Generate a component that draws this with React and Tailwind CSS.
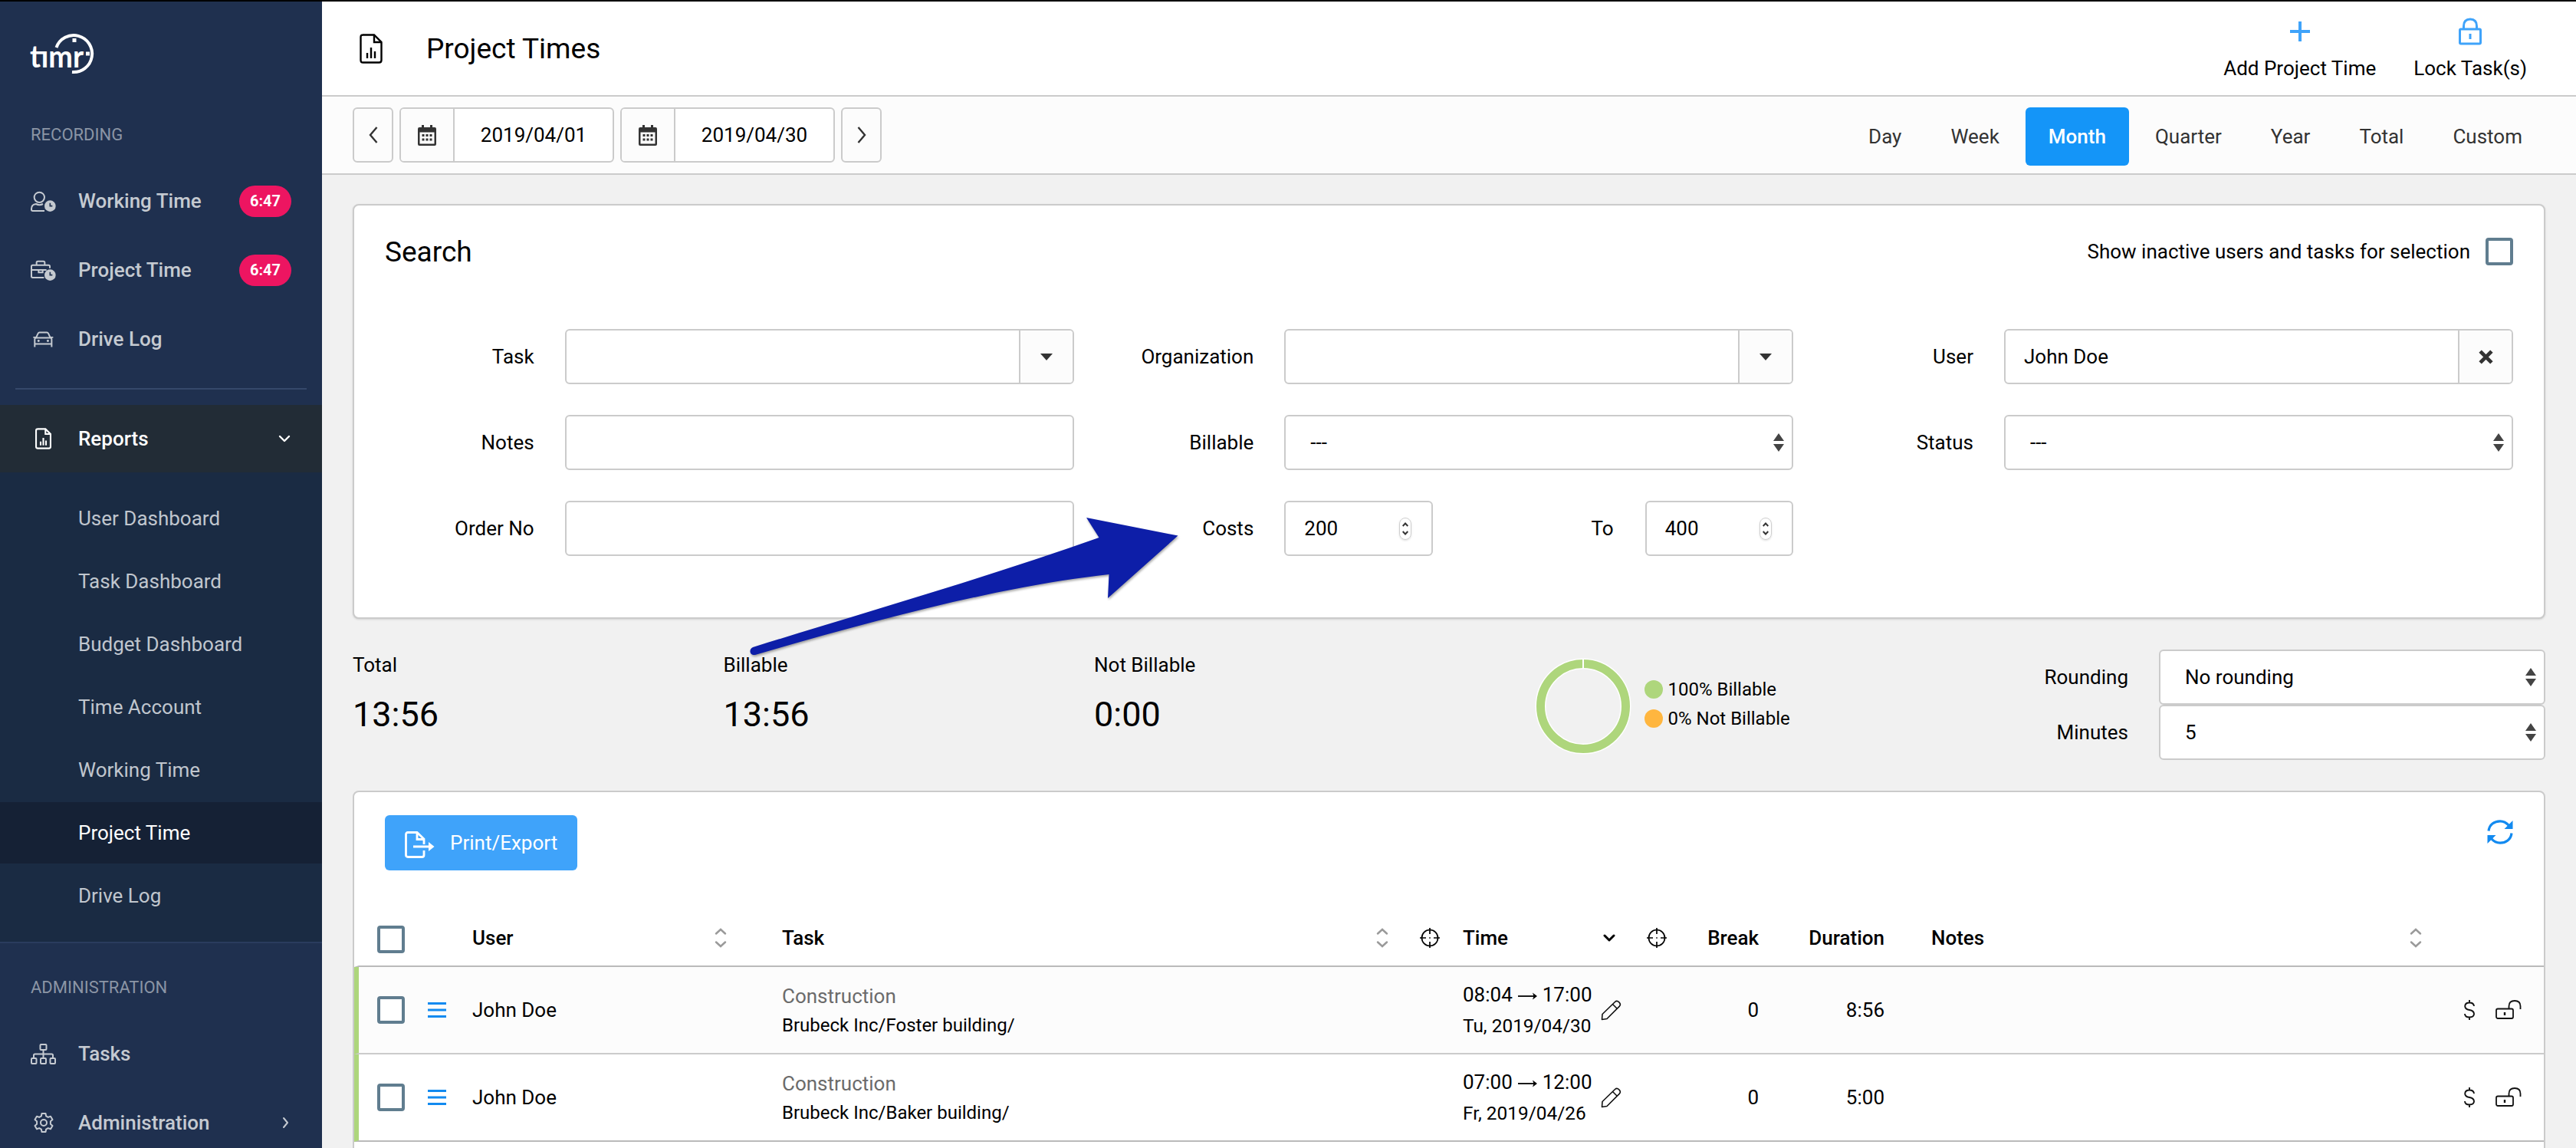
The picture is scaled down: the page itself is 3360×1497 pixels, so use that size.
import React, { useState } from 'react';

const PERIODS = ['Day', 'Week', 'Month', 'Quarter', 'Year', 'Total', 'Custom'];

const REPORTS = [
    'User Dashboard',
    'Task Dashboard',
    'Budget Dashboard',
    'Time Account',
    'Working Time',
    'Project Time',
    'Drive Log'
];

const ROWS = [
    { id: 1, user: 'John Doe', task: 'Construction', path: 'Brubeck Inc/Foster building/', from: '08:04', to: '17:00', date: 'Tu, 2019/04/30', pause: '0', duration: '8:56' },
    { id: 2, user: 'John Doe', task: 'Construction', path: 'Brubeck Inc/Baker building/', from: '07:00', to: '12:00', date: 'Fr, 2019/04/26', pause: '0', duration: '5:00' },
];

const COLS = 'grid grid-cols-[66px_58px_404px_832px_56px_240px_146px_164px_756px_1fr] items-center pl-6';

/* ---------- Icons ---------- */

const Logo = () => (
    <svg className="w-[86px] h-[56px]" viewBox="0 0 86 56" fill="none">
        <text x="0" y="46" textLength="70" lengthAdjust="spacingAndGlyphs" fill="#fff" className="font-['Lato'] font-bold text-[41px]">tımr</text>
        <path d="M34.500 20 A24 24 0 1 1 55 52" stroke="#fff" strokeWidth="4" />
        <rect x="55.500" y="8" width="5" height="5" fill="#fff" />
        <rect x="73" y="25.500" width="5" height="5" fill="#fff" />
    </svg>
);

const UserClock = () => (
    <svg className="w-[33px] h-[29px]" viewBox="30 655 99 87" fill="none" stroke="currentColor" strokeWidth="6">
        <circle cx="64" cy="683" r="20" />
        <path d="M84 736H38q-5 0-5-5v-3q0-17 18-19q13 7 27 0" />
        <circle cx="106" cy="717" r="22" fill="currentColor" stroke="none" />
        <path d="M106 705V717H115" stroke="#1f304f" strokeWidth="5" />
    </svg>
);

const BriefcaseClock = () => (
    <svg className="w-[33px] h-[29px]" viewBox="30 925 99 87" fill="none" stroke="currentColor" strokeWidth="6">
        <path d="M82 997H38q-5 0-5-5V953q0-5 5-5H100q5 0 5 5v7" />
        <path d="M53 948v-10q0-5 5-5h22q5 0 5 5v10M33 967H92M61 968V977H77V968" />
        <circle cx="106" cy="987" r="22" fill="currentColor" stroke="none" />
        <path d="M106 975V987H115" stroke="#1f304f" strokeWidth="5" />
    </svg>
);

const Car = () => (
    <svg className="w-[27px] h-[23px]" viewBox="38 1206 82 68" fill="none" stroke="currentColor" strokeWidth="6">
        <path d="M50 1234L58 1217q2-4 6-4h29q4 0 6 4L107 1234M39 1232h10M108 1232h10" />
        <path d="M45 1270V1240q0-6 6-6h55q6 0 6 6V1270M45 1258H112" />
        <circle cx="60" cy="1246" r="4.500" fill="currentColor" stroke="none" />
        <circle cx="97" cy="1246" r="4.500" fill="currentColor" stroke="none" />
    </svg>
);

const FileChart = ({ className }) => (
    <svg className={className} viewBox="0 0 30 39" fill="none" stroke="currentColor">
        <path d="M4 1.500H19L28.500 11V34.500q0 3-3 3H4.500q-3 0-3-3V4.500q0-3 3-3Z" />
        <path d="M19 2V11H28.500M10 25V32M15 18V32M20 23V32" />
    </svg>
);

const Sitemap = () => (
    <svg className="w-[33px] h-[27px]" viewBox="0 0 33 27" fill="none" stroke="currentColor" strokeWidth="2">
        <rect x="12.500" y="1" width="8" height="7" rx="1" />
        <rect x="1" y="19" width="6.500" height="7" rx="1" />
        <rect x="13" y="19" width="7" height="7" rx="1" />
        <rect x="25.500" y="19" width="6.500" height="7" rx="1" />
        <path d="M16.500 8V19M4 19V15q0-1.500 1.500-1.500H27.500q1.500 0 1.500 1.500V19" />
    </svg>
);

const Gear = () => (
    <svg className="w-[26px] h-[26px]" viewBox="0 0 26 26" fill="none" stroke="currentColor" strokeWidth="2" strokeLinejoin="round">
        <path d="M10.500 1h5l.6 3.300 2.700 1.600 3.200-1.200 2.500 4.300-2.600 2.200v3.600l2.600 2.200-2.500 4.300-3.200-1.200-2.700 1.600-.6 3.300h-5l-.6-3.300-2.700-1.600-3.200 1.200-2.500-4.300 2.600-2.200v-3.600L1.500 9l2.500-4.300 3.200 1.200 2.700-1.600Z" />
        <circle cx="13" cy="13" r="4" />
    </svg>
);

const Chevron = ({ className, d, width = 3 }) => (
    <svg className={className} viewBox="0 0 16 16" fill="none" stroke="currentColor" strokeWidth={width} strokeLinecap="round" strokeLinejoin="round">
        <path d={d} />
    </svg>
);

const Calendar = () => (
    <svg className="w-6 h-[27px] text-[#333]" viewBox="0 0 24 27">
        <path fill="currentColor" fillRule="evenodd" d="M5 0h3v3h8V0h3v3h3q2 0 2 2V25q0 2-2 2H2q-2 0-2-2V5q0-2 2-2h3ZM2.500 9.500V24.500h19V9.500Z" />
        <path stroke="currentColor" strokeWidth="3" d="M5.500 13.500h3M10.500 13.500h3M15.500 13.500h3M5.500 19h3M10.500 19h3M15.500 19h3" />
    </svg>
);

const Sort = () => (
    <svg className="w-4 h-[26px] shrink-0" viewBox="0 0 16 26" fill="none" stroke="#9a9a9a" strokeWidth="2.500" strokeLinecap="round">
        <path d="M2 7.500L8 2l6 5.500M2 18.500l6 5.500 6-5.500" />
    </svg>
);

const Crosshair = () => (
    <svg className="w-[26px] h-[26px]" viewBox="0 0 26 26" fill="none" stroke="#000" strokeWidth="1.700">
        <circle cx="13" cy="13" r="10.500" />
        <path d="M13 0V8M13 18V26M0 13H8M18 13H26M12.200 13h1.600" />
    </svg>
);

const Pencil = () => (
    <svg className="w-[27px] h-[27px] shrink-0" viewBox="0 0 27 27" fill="none" stroke="#111" strokeWidth="1.600" strokeLinejoin="round">
        <path d="M1.500 25.500L2 18.500L18.500 2.500q2.500-2.300 5.300.3t.6 5.300L8 24.500ZM15.500 5.500L21.500 11.500" />
    </svg>
);

const Unlock = () => (
    <svg className="w-[34px] h-[26px]" viewBox="0 0 34 26" fill="none" stroke="#111" strokeWidth="1.800">
        <rect x="1" y="11.500" width="22" height="12.500" rx="2" />
        <path d="M17.500 11.500V8q0-7 7.500-7t7.500 7v4" />
        <path d="M12 16v4" strokeWidth="2.400" />
    </svg>
);

const Refresh = () => (
    <svg className="w-[34px] h-[34px] text-[#128af0]" viewBox="0 0 34 34" fill="none" stroke="currentColor" strokeWidth="3.200">
        <path d="M2 15.500C3 7 9.500 2.800 17 2.800c5 0 8.500 2.200 11.500 5.700M32 18.500C31 27 24.500 31.200 17 31.200c-5 0-8.500-2.200-11.500-5.700" />
        <path d="M33.500 2V13H22.500ZM.5 32V21H11.500Z" fill="currentColor" stroke="none" />
    </svg>
);

/* ---------- Form pieces ---------- */

const Checkbox = ({ className = '' }) => (
    <span className={`block size-9 shrink-0 rounded-[4px] border-4 border-[#607d8f] bg-white ${className}`}></span>
);

const Arrows = () => (
    <svg className="w-4 h-6" viewBox="0 0 16 24" fill="#444">
        <path d="M8 0l7 10H1ZM8 24l7-10H1Z" />
    </svg>
);

const Field = ({ label, children }) => (
    <div className="flex items-center gap-10 h-[72px]">
        <label className="w-[194.67px] text-right">{label}</label>
        <div className="flex-1 h-full flex">{children}</div>
    </div>
);

const TextBox = ({ children, addon }) => (
    <div className="flex-1 flex border-2 border-[#cbcbcb] rounded-[6px] bg-white overflow-hidden">
        <div className="flex-1 flex items-center pl-6">{children}</div>
        {addon && <div className="w-[70px] border-l-2 border-[#cbcbcb] bg-[#fcfcfc] flex items-center justify-center">{addon}</div>}
    </div>
);

const SelectBox = ({ children }) => (
    <div className="flex-1 h-[72px] flex items-center justify-between border-2 border-[#cbcbcb] rounded-[6px] bg-white pl-8 pr-[9px]">
        {children}
        <Arrows />
    </div>
);

const NumberBox = ({ children }) => (
    <div className="w-[193.67px] flex items-center justify-between border-2 border-[#cbcbcb] rounded-[6px] bg-white pl-6 pr-[26px]">
        {children}
        <span className="w-4 h-[29px] rounded-full border border-[#cfcfcf] shadow-sm flex items-center justify-center">
            <svg className="w-2 h-[17px]" viewBox="0 0 8 17" fill="none" stroke="#333" strokeWidth="2"><path d="M.7 5L4 1.500 7.300 5M.7 12L4 15.500 7.300 12" /></svg>
        </span>
    </div>
);

const Caret = () => <svg className="w-4 h-[9px]" viewBox="0 0 16 9" fill="#333"><path d="M0 0H16L8 9Z" /></svg>;

const DateBox = ({ value }) => (
    <div className="w-[280px] h-[72px] flex border-2 border-[#cbcbcb] rounded-[6px] bg-white overflow-hidden">
        <div className="w-[70px] border-r-2 border-[#cbcbcb] bg-[#fcfcfc] flex items-center justify-center"><Calendar /></div>
        <div className="flex-1 flex items-center justify-center">{value}</div>
    </div>
);

const ArrowButton = ({ d }) => (
    <button className="w-[53px] h-[72px] border-2 border-[#cbcbcb] rounded-[6px] bg-[#fcfcfc] flex items-center justify-center text-[#333]">
        <svg className="w-3 h-[22px]" viewBox="0 0 12 22" fill="none" stroke="currentColor" strokeWidth="2.400"><path d={d} /></svg>
    </button>
);

/* ---------- Sidebar ---------- */

const NavItem = ({ icon, label, badge, active, end }) => (
    <div className={`h-[88px] shrink-0 flex items-center pl-10 pr-10 font-medium ${active ? 'bg-[#222c36] text-white' : 'text-[#c5cad1]'}`}>
        <span className="w-[33px] flex justify-center">{icon}</span>
        <span className="ml-[29px] flex-1">{label}</span>
        {badge && <span className="h-[41px] w-[68px] rounded-full bg-[#ed1561] text-white text-[20px] font-bold flex items-center justify-center">{badge}</span>}
        {end}
    </div>
);

const Sidebar = () => (
    <aside className="w-[420px] shrink-0 bg-[#1f304f] flex flex-col">
        <div className="h-[132px] shrink-0 pl-[39px] pt-10"><Logo /></div>
        <div className="h-[84px] shrink-0 flex items-center pl-10 text-[22px] text-[#8b95a5]">RECORDING</div>
        <div className="flex flex-col gap-[2px]">
            <NavItem icon={<UserClock />} label="Working Time" badge="6:47" />
            <NavItem icon={<BriefcaseClock />} label="Project Time" badge="6:47" />
            <NavItem icon={<Car />} label="Drive Log" />
        </div>
        <div className="h-[2px] shrink-0 mx-5 my-5 bg-[#35486a]"></div>
        <NavItem
            icon={<FileChart className="w-[21px] h-[28px] stroke-[3]" />}
            label="Reports"
            active
            end={<Chevron className="size-4 mr-[1px]" d="M2 5l6 6 6-6" width={2.4} />}
        />
        <ul className="shrink-0 bg-[#1a2b43] py-5 border-b-2 border-[#2a3c5e] flex flex-col gap-[2px]">
            {REPORTS.map((item) => (
                <li key={item} className={`h-20 flex items-center pl-[102px] ${item === 'Project Time' ? 'bg-[#152135] text-white' : 'text-[#c0c6ce]'}`}>
                    {item}
                </li>
            ))}
        </ul>
        <div className="h-[100px] shrink-0 pt-4 flex items-center pl-10 text-[22px] text-[#8b95a5]">ADMINISTRATION</div>
        <div className="flex flex-col gap-[2px]">
            <NavItem icon={<Sitemap />} label="Tasks" />
            <NavItem icon={<Gear />} label="Administration" end={<Chevron className="size-4" d="M6 2l5 6-5 6" width={2} />} />
        </div>
    </aside>
);

/* ---------- Main ---------- */

const Stat = ({ label, value }) => (
    <div className="w-[483.500px] pt-[2px]">
        <div className="leading-9">{label}</div>
        <div className="text-[45px] leading-[54px] mt-5">{value}</div>
    </div>
);

export default function App() {
    const [period, setPeriod] = useState('Month');

    return (
        <div className="relative w-[3360px] h-[1497px] overflow-hidden flex flex-col border-t-2 border-black bg-[#f1f1f1] text-black text-[26px] leading-none font-['Roboto',sans-serif]">
            <div className="flex-1 flex items-start">
                <Sidebar />

                <main className="flex-1 min-w-0">
                    <header className="h-[124px] bg-white border-b-2 border-[#cbcbcb] flex items-center justify-between pl-[49px] pr-[64px]">
                        <div className="flex items-center">
                            <FileChart className="w-[30px] h-[39px] stroke-[2.4]" />
                            <h1 className="ml-[57px] text-[37px]">Project Times</h1>
                        </div>
                        <div className="flex gap-[49px] pb-[1px]">
                            <div className="flex flex-col items-center">
                                <svg className="w-[26px] h-[36px]" viewBox="0 0 26 36" stroke="#3fa3fa" strokeWidth="4"><path d="M13 5V31M0 18H26" /></svg>
                                <span className="mt-[17px]">Add Project Time</span>
                            </div>
                            <div className="flex flex-col items-center">
                                <svg className="w-[30px] h-[36px]" viewBox="0 0 30 36" fill="none" stroke="#3fa3fa" strokeWidth="3">
                                    <rect x="1.500" y="15" width="27" height="19" rx="1.500" />
                                    <path d="M6.500 15V11q0-9 8.500-9t8.500 9v4M15 21v7" />
                                </svg>
                                <span className="mt-[17px]">Lock Task(s)</span>
                            </div>
                        </div>
                    </header>

                    <div className="h-[102px] bg-[#fcfcfc] border-b-2 border-[#cbcbcb] pt-[14px] px-10 flex items-start justify-between">
                        <div className="flex gap-2">
                            <ArrowButton d="M10.500 1L2 11l8.500 10" />
                            <DateBox value="2019/04/01" />
                            <DateBox value="2019/04/30" />
                            <ArrowButton d="M1.500 1L10 11 1.500 21" />
                        </div>
                        <div className="flex gap-1">
                            {PERIODS.map((p) => (
                                <button
                                    key={p}
                                    onClick={() => setPeriod(p)}
                                    className={`h-[76px] px-[30px] rounded-[6px] ${p === period ? 'bg-[#1495f8] text-white font-medium' : 'text-[#333]'}`}
                                >
                                    {p}
                                </button>
                            ))}
                        </div>
                    </div>

                    <div className="px-10 pt-[38px]">
                        {/* Search */}
                        <section className="h-[541px] bg-white border-2 border-[#cbcbcb] rounded-[8px] shadow-sm px-10">
                            <div className="h-[120px] flex items-center justify-between">
                                <h2 className="text-[37px]">Search</h2>
                                <div className="flex items-center gap-5">
                                    <span>Show inactive users and tasks for selection</span>
                                    <Checkbox />
                                </div>
                            </div>
                            <div className="grid grid-cols-3 gap-10 mt-[41px]">
                                <Field label="Task"><TextBox addon={<Caret />} /></Field>
                                <Field label="Organization"><TextBox addon={<Caret />} /></Field>
                                <Field label="User">
                                    <TextBox addon={<svg className="w-[19px] h-[19px]" viewBox="0 0 18 18" stroke="#333" strokeWidth="4.600"><path d="M2 2L16 16M16 2L2 16" /></svg>}>John Doe</TextBox>
                                </Field>
                                <Field label="Notes"><TextBox /></Field>
                                <Field label="Billable"><SelectBox>---</SelectBox></Field>
                                <Field label="Status"><SelectBox>---</SelectBox></Field>
                                <Field label="Order No"><TextBox /></Field>
                                <Field label="Costs">
                                    <NumberBox>200</NumberBox>
                                    <label className="flex-1 flex items-center justify-end pr-[41px]">To</label>
                                    <NumberBox>400</NumberBox>
                                </Field>
                            </div>
                        </section>

                        {/* Totals */}
                        <section className="h-[144px] my-10 flex">
                            <Stat label="Total" value="13:56" />
                            <Stat label="Billable" value="13:56" />
                            <Stat label="Not Billable" value="0:00" />
                            <div className="ml-[91px] mt-[11px] flex">
                                <svg className="w-[126px] h-[126px]" viewBox="0 0 126 126" fill="none">
                                    <circle cx="63" cy="63" r="55.500" stroke="#fff" strokeWidth="14" />
                                    <circle cx="63" cy="63" r="55.500" stroke="#aed67c" strokeWidth="11" />
                                    <path d="M63 1V14" stroke="#fff" strokeWidth="2" />
                                </svg>
                                <div className="ml-[17px] mt-[29px] text-[24px] flex flex-col gap-[14px]">
                                    <div className="flex items-center gap-[7px]"><span className="size-6 rounded-full bg-[#aed67c]"></span>100% Billable</div>
                                    <div className="flex items-center gap-[7px]"><span className="size-6 rounded-full bg-[#ffb63f]"></span>0% Not Billable</div>
                                </div>
                            </div>
                            <div className="ml-auto w-[700px]">
                                <div className="flex items-center gap-10"><label className="flex-1 text-right">Rounding</label><div className="w-[504px] flex"><SelectBox>No rounding</SelectBox></div></div>
                                <div className="flex items-center gap-10"><label className="flex-1 text-right">Minutes</label><div className="w-[504px] flex"><SelectBox>5</SelectBox></div></div>
                            </div>
                        </section>

                        {/* Entries */}
                        <section className="h-[600px] bg-white border-2 border-[#cbcbcb] rounded-[8px]">
                            <div className="flex justify-between px-10 pt-[30px]">
                                <button className="w-[251px] h-[72px] rounded-[6px] bg-[#3fa3fa] text-white flex items-center pl-[26px]">
                                    <svg className="w-[39px] h-[35px] mt-1" viewBox="0 0 39 35" fill="none" stroke="currentColor" strokeWidth="2.800">
                                        <path d="M25 25V31q0 2.500-2.500 2.500H4q-2.500 0-2.500-2.500V4q0-2.500 2.500-2.500H16L25 10V17M16 2V10.500H25M11 20H34" />
                                        <path d="M31 14L38.500 20L31 26Z" fill="currentColor" stroke="none" />
                                    </svg>
                                    <span className="ml-5">Print/Export</span>
                                </button>
                                <div className="pt-[5px]"><Refresh /></div>
                            </div>

                            <div className={`${COLS} mt-[52px] h-[74px] border-b-2 border-[#bababa] border-l-[6px] border-l-transparent font-medium`}>
                                <Checkbox className="mt-1" />
                                <span></span>
                                <div className="flex items-center justify-between pr-[72px]">User<Sort /></div>
                                <div className="flex items-center justify-between pr-[41px]">Task<Sort /></div>
                                <Crosshair />
                                <div className="flex items-center justify-between pr-[41px]">Time<Chevron className="size-4" d="M2 5l6 6 6-6" /></div>
                                <div className="flex items-center justify-between">
                                    <Crosshair />
                                    Break
                                </div>
                                <div className="text-right">Duration</div>
                                <div className="flex items-center justify-between pl-[61px] pr-[55px]">Notes<Sort /></div>
                                <span></span>
                            </div>

                            {ROWS.map((row, i) => (
                                <div key={row.id} className={`${COLS} h-[114px] border-b-2 border-l-[6px] border-l-[#aed67c] ${i === 0 ? 'bg-[#fcfcfc] border-b-[#cbcbcb]' : 'border-b-[#bababa]'}`}>
                                    <Checkbox />
                                    <svg className="w-[24px] h-[22px]" viewBox="0 0 24 22" stroke="#128af0" strokeWidth="3"><path d="M0 2.500H24M0 11H24M0 19.500H24" /></svg>
                                    <div>{row.user}</div>
                                    <div className="pt-[1px]">
                                        <div className="text-[#6b6b6b]">{row.task}</div>
                                        <div className="text-[24px] mt-[13px]">{row.path}</div>
                                    </div>
                                    <span></span>
                                    <div className="flex items-center justify-between pr-[33px]">
                                        <div>
                                            <div className="flex items-center whitespace-nowrap">
                                                {row.from}
                                                <svg className="w-[25px] h-3 mx-[7px] mt-1" viewBox="0 0 25 12" fill="none" stroke="#000" strokeWidth="1.800"><path d="M0 6H23" /><path d="M19 1.500L25 6L19 10.500L20.500 6Z" fill="#000" stroke="none" /></svg>
                                                {row.to}
                                            </div>
                                            <div className="text-[24.4px] mt-4">{row.date}</div>
                                        </div>
                                        <Pencil />
                                    </div>
                                    <div className="text-right">{row.pause}</div>
                                    <div className="text-right">{row.duration}</div>
                                    <span></span>
                                    <div className="flex items-center">
                                        <svg className="w-[14px] h-[26px]" viewBox="0 0 14 26" fill="none" stroke="#111" strokeWidth="1.900">
                                            <path d="M7 0V3.500M7 22.500V26M13 8q-.5-4.500-6-4.500T1.200 8Q1.200 12 7 13T13 18q0 4.500-6 4.500T1 18" />
                                        </svg>
                                        <span className="ml-[27px]"><Unlock /></span>
                                    </div>
                                </div>
                            ))}
                        </section>
                    </div>
                </main>
            </div>

            {/* Pointer to the costs filter */}
            <svg className="absolute left-[970px] top-[660px] w-[580px] h-[210px] drop-shadow-[1px_2px_1.5px_rgba(0,0,0,0.35)]" viewBox="970 662 580 210">
                <path fill="#0d1ea8" d="M982 844C1130 798 1290 752 1433.500 701L1417 675L1536.500 698.500L1445 780L1446.500 749C1300 765 1130 812 985 854C978 855 976 847 982 844Z" />
            </svg>
        </div>
    );
}
